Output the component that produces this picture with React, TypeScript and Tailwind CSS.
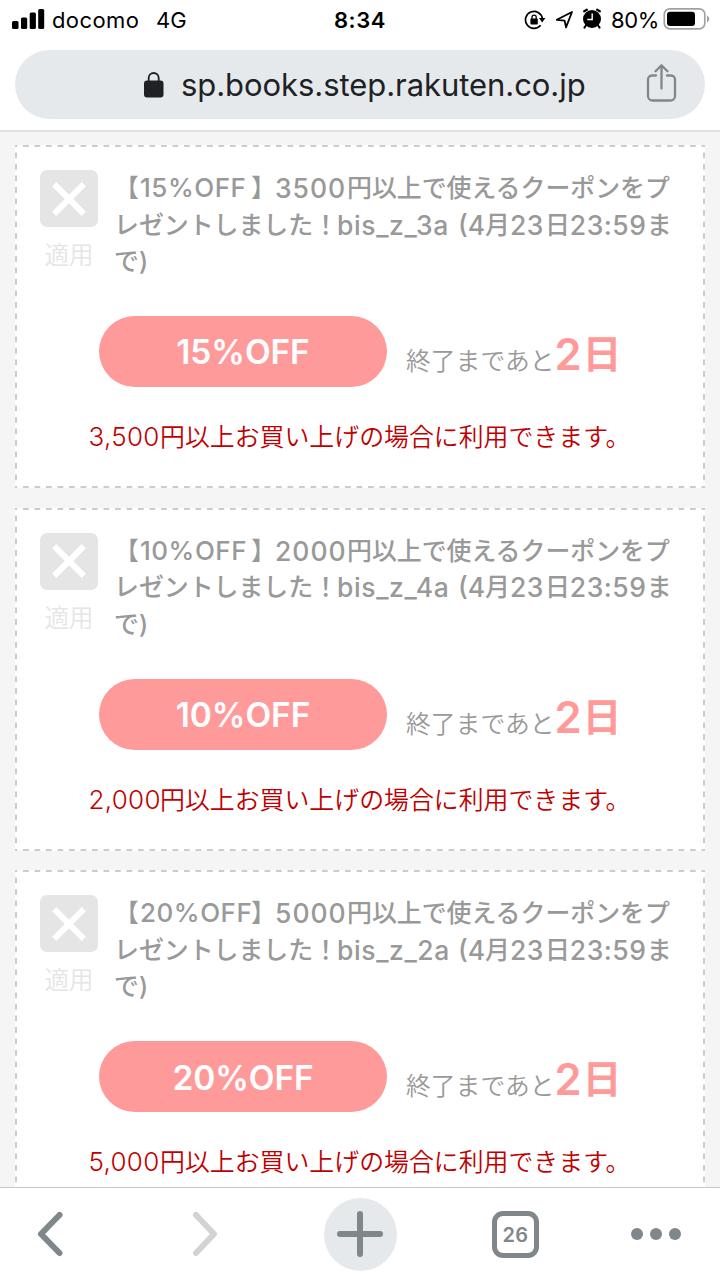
import React from "react";

type Coupon = { rate: string; amount: string; minimum: string; code: string };

const coupons: Coupon[] = [
  { rate: "15", amount: "3500", minimum: "3,500", code: "3a" },
  { rate: "10", amount: "2000", minimum: "2,000", code: "4a" },
  { rate: "20", amount: "5000", minimum: "5,000", code: "2a" },
];

function StatusBar() {
  return (
    <div className="grid h-[50px] grid-cols-3 items-start pt-[6px] font-['Inter','Liberation_Sans',sans-serif] text-[22px] leading-[28px] text-black">
      <div className="flex pl-3">
        <svg width="33" height="24" viewBox="0 0 33 24" className="mt-[2px]">
          <rect x="0" y="13" width="6.5" height="8" rx="1.5" />
          <rect x="9" y="9.5" width="6.2" height="11.5" rx="1.5" />
          <rect x="17.7" y="4.5" width="6.2" height="16.5" rx="1.5" />
          <rect x="26.2" y="1" width="6" height="20" rx="1.5" />
        </svg>
        <span className="ml-[7px] w-[104px] tracking-[0.4px]">docomo</span>
        <span>4G</span>
      </div>
      <div className="text-center font-semibold tracking-[0.6px]">8:34</div>
      <div className="flex justify-end pr-[9px]">
        <svg width="22" height="22" viewBox="0 0 22 22" className="mt-[3px] shrink-0">
          <path d="M16.6 16.2A8.5 8.5 0 1 1 18.4 9.5" fill="none" stroke="#000" strokeWidth="1.7" />
          <path d="M15 9h6.4l-3.2 4.4z" />
          <rect x="6.4" y="9.6" width="7.4" height="5.8" rx="1" />
          <path d="M8 10V8.2a2.1 2.1 0 0 1 4.2 0V10" fill="none" stroke="#000" strokeWidth="1.3" />
        </svg>
        <svg width="19" height="20" viewBox="0 0 19 20" className="ml-[9px] mt-[4px] shrink-0">
          <path d="M1.8 9.8 17 2 11 17.3 9.6 10.6z" fill="none" stroke="#000" strokeWidth="1.8" strokeLinejoin="round" />
        </svg>
        <svg width="20" height="22" viewBox="0 0 20 22" className="ml-[8px] mt-[2px] shrink-0">
          <circle cx="10" cy="11" r="9" />
          <path d="M2.2 3.2 4.8 1.8M17.8 3.2 15.2 1.8" stroke="#000" strokeWidth="2.4" strokeLinecap="round" />
          <path d="M4.6 16.5 2.4 19.6M15.4 16.5l2.2 3.1" stroke="#000" strokeWidth="2" strokeLinecap="round" />
          <path d="M10.2 5.5v6H5.3" fill="none" stroke="#fff" strokeWidth="1.4" />
        </svg>
        <span className="ml-[9px] w-[52px] whitespace-nowrap tracking-[-0.4px]">80%</span>
        <svg width="48" height="24" viewBox="0 0 48 24" className="mt-[1px] shrink-0">
          <rect x="1.3" y="1.8" width="40.5" height="20" rx="5.5" fill="none" stroke="#a2a2a2" strokeWidth="1.7" />
          <rect x="4" y="4.7" width="28" height="14.3" rx="3" />
          <path d="M44 8.5v7c3-1.5 3-5.5 0-7z" fill="#a2a2a2" />
        </svg>
      </div>
    </div>
  );
}

function AddressBar() {
  return (
    <div className="mx-[15px] flex h-[69px] items-center rounded-full bg-[#e6e9ec]">
      <svg width="20" height="26" viewBox="0 0 20 26" className="ml-[129px]">
        <rect x="0" y="8.5" width="19.5" height="17" rx="3" fill="#202124" />
        <path d="M4.7 10V6a5 5 0 0 1 10 0v4" fill="none" stroke="#202124" strokeWidth="1.8" />
      </svg>
      <span className="ml-[17px] w-[406px] whitespace-nowrap font-['Inter','Liberation_Sans',sans-serif] text-[31px] leading-[40px] tracking-[-0.06px] text-[#202124]">sp.books.step.rakuten.co.jp</span>
      <svg width="32" height="40" viewBox="0 0 32 40" fill="none" stroke="#80878a" strokeWidth="2.3" strokeLinecap="round" strokeLinejoin="round" className="mb-[4px] ml-[59px]">
        <path d="M10 12.5H6a4 4 0 0 0-4 4V33a4.5 4.5 0 0 0 4.5 4.5h18A4.5 4.5 0 0 0 29 33V16.5a4 4 0 0 0-4-4h-4" />
        <path d="M15.5 25.5V2.5M9.5 8.3l6-6 6 6" />
      </svg>
    </div>
  );
}

function CouponCard({ coupon }: { coupon: Coupon }) {
  return (
    <article className="h-[343px] shrink-0 px-[25px] pt-[25px] [background:linear-gradient(90deg,#ccc_6px,transparent_6px)_-3.5px_0/11.5px_2px_repeat-x,linear-gradient(90deg,#ccc_6px,transparent_6px)_-3.5px_100%/11.5px_2px_repeat-x,linear-gradient(#ccc_6px,transparent_6px)_0_-4px/2px_11.5px_repeat-y,linear-gradient(#ccc_6px,transparent_6px)_100%_-4px/2px_11.5px_repeat-y,#fff]">
      <div className="flex h-[146px]">
        <div className="w-[58px]">
          <div className="flex h-[57px] items-center justify-center rounded-[7px] bg-[#e5e5e5]">
            <svg width="36" height="36" viewBox="0 0 36 36" stroke="#fff" strokeWidth="6">
              <path d="M3.2 3.2l29.6 29.6M32.8 3.2L3.2 32.8" />
            </svg>
          </div>
          <div className="mt-[10px] text-center text-[24.5px] font-[350] leading-[36px] text-[#e5e5e5]">適用</div>
        </div>
        <h2 className="ml-[16px] whitespace-nowrap text-[24.9px] font-medium leading-[36.5px] text-[#999]">
          <div className="flex">
            <span className="w-[26px]">【</span>
            <span className="w-[111px] text-[26px] font-medium tracking-[0.5px]">{coupon.rate}%OFF</span>
            <span className="w-[24px]">】</span>
            <span className="w-[72px] text-[26.5px] font-medium tracking-[1px]">{coupon.amount}</span>
            <span>円以上で使えるクーポンをプ</span>
          </div>
          <div className="flex">
            <span className="w-[223px]">レゼントしました！</span>
            <span className="w-[121px] text-[26.5px] font-medium tracking-[0.6px]">bis_z_{coupon.code}</span>
            <span className="w-[27px] text-[26.5px] font-medium">(4</span>
            <span>月</span>
            <span className="w-[35px] text-[26.5px] font-medium tracking-[0.5px]">23</span>
            <span>日</span>
            <span className="w-[77px] text-[26.5px] font-medium tracking-[0.5px]">23:59</span>
            <span>ま</span>
          </div>
          <div>で)</div>
        </h2>
      </div>
      <div className="flex h-[71px] pl-[59px]">
        <div className="flex w-[288px] items-center justify-center rounded-full bg-[#ff9a9a] pt-[2px] text-[33.5px] font-semibold tracking-[-0.1px] text-white">{coupon.rate}%OFF</div>
        <div className="ml-[19px] flex items-baseline whitespace-nowrap leading-[76px] text-[#999]">
          <span className="text-[24.8px] font-[350]">終了まであと</span>
          <span className="w-[28px] text-[43.5px] font-semibold text-[#ff9a9a]">2</span>
          <span className="mb-[2px] text-[39px] font-bold leading-[70px] text-[#ff9a9a] [transform:translateY(-2px)]">日</span>
        </div>
      </div>
      <p className="mt-[32px] flex whitespace-nowrap pl-[48.5px] text-[24.9px] font-[350] leading-[36px] text-[#c00000]">
        <span className="w-[71.5px] text-[26px] tracking-[0.3px]">{coupon.minimum}</span>
        <span>円以上お買い上げの場合に利用できます。</span>
      </p>
    </article>
  );
}

function Toolbar() {
  return (
    <nav className="flex h-[93px] shrink-0 items-center border-t border-[#c6c6c6] bg-white">
      <svg width="26" height="46" viewBox="0 0 26 46" className="ml-[37px]" fill="none" stroke="#80878a" strokeWidth="6" strokeLinecap="round" strokeLinejoin="round">
        <path d="M22.5 4 4 23l18.5 19" />
      </svg>
      <svg width="26" height="46" viewBox="0 0 26 46" className="ml-[129px]" fill="none" stroke="#d3d3d3" strokeWidth="6" strokeLinecap="round" strokeLinejoin="round">
        <path d="M4 4l18 19L4 42" />
      </svg>
      <div className="ml-[105.5px] flex size-[73px] items-center justify-center rounded-full bg-[#e6e9ec]">
        <svg width="46" height="46" viewBox="0 0 46 46" stroke="#80878a" strokeWidth="6" strokeLinecap="round">
          <path d="M23 3v40M3 23h40" />
        </svg>
      </div>
      <div className="ml-[95.5px] flex size-[47px] items-center justify-center rounded-[11px] border-[5px] border-[#80878a] pt-[2px] font-['Inter',sans-serif] text-[20px] font-semibold tracking-[0.4px] text-[#80878a]">26</div>
      <div className="ml-[92px] flex gap-[7px]">
        <i className="size-3 rounded-full bg-[#80878a]" />
        <i className="size-3 rounded-full bg-[#80878a]" />
        <i className="size-3 rounded-full bg-[#80878a]" />
      </div>
    </nav>
  );
}

export default function App() {
  return (
    <div className="flex h-[1280px] w-[720px] flex-col overflow-hidden bg-white">
      <header className="h-[132px] shrink-0 border-b-2 border-[#e0e0e0] bg-white">
        <StatusBar />
        <AddressBar />
      </header>
      <main className="flex min-h-0 flex-1 flex-col gap-[19.6px] overflow-hidden bg-[#f5f5f5] px-[15px] pt-[13px] font-['Inter','Noto_Sans_CJK_JP',sans-serif]">
        {coupons.map((coupon) => (
          <CouponCard key={coupon.rate} coupon={coupon} />
        ))}
      </main>
      <Toolbar />
    </div>
  );
}
